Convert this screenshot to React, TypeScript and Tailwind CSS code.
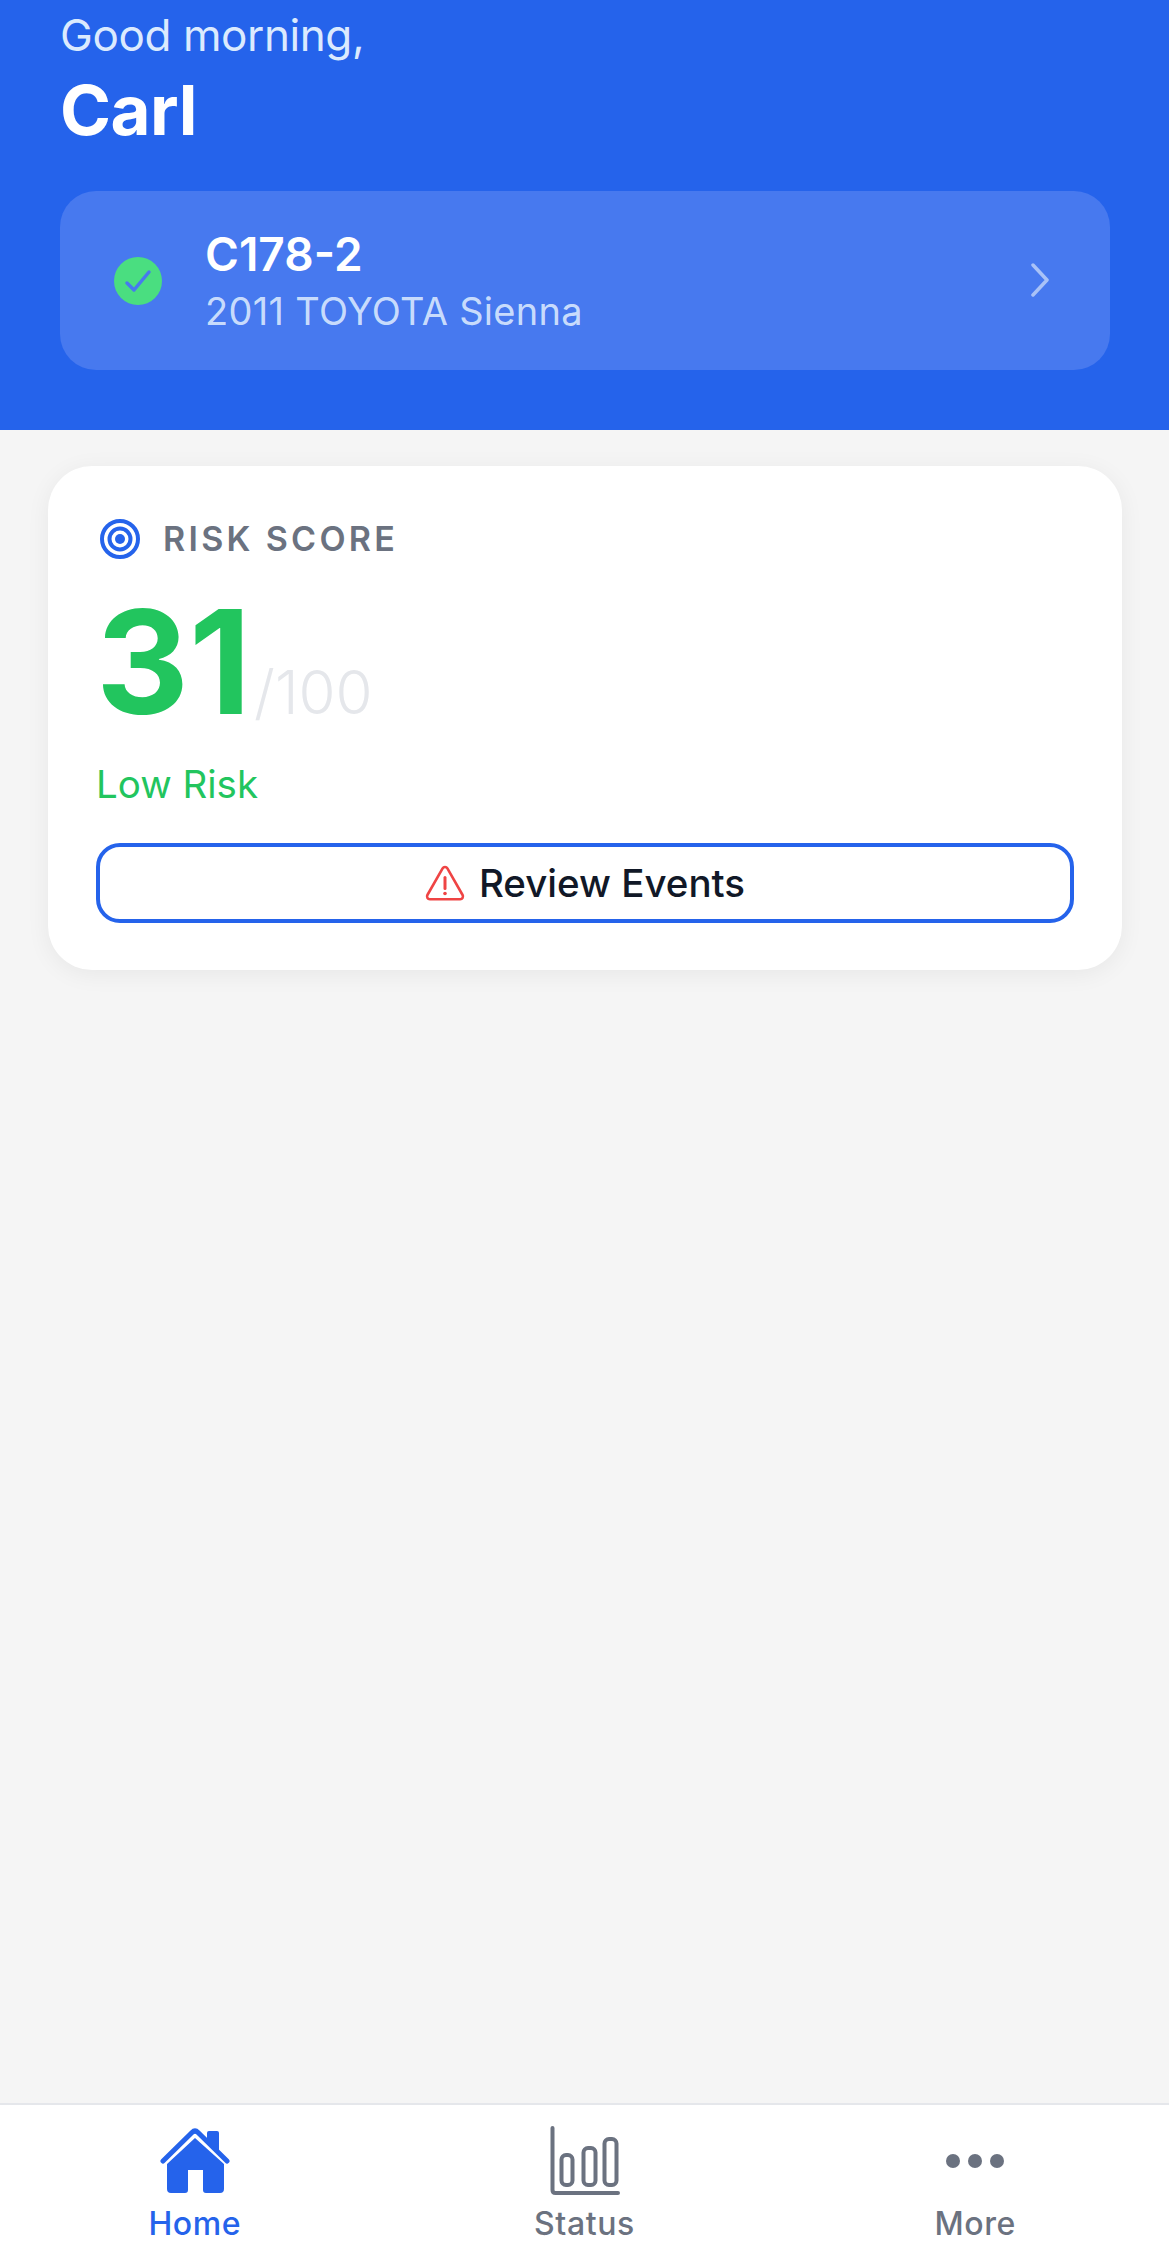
export default function App() {
  return (
    <div className="h-[2258px] w-full flex flex-col bg-[#f5f5f5] font-['Inter',sans-serif] overflow-hidden">
      <header className="h-[430px] shrink-0 bg-[#2563eb] pl-[60px] pr-[59px] pt-[7px]">
        <p className="text-[44px] leading-[56px] tracking-[-0.4px] text-[#dbeafe]">Good morning,</p>
        <h1 className="mt-[5px] text-[69px] leading-[84px] font-bold tracking-[-0.5px] text-white">Carl</h1>
        <button className="mt-[39px] flex h-[179px] w-full items-center rounded-[36px] bg-[#4779ef] pl-[54px] pr-[60px] text-left">
          <svg width="48" height="48" viewBox="0 0 48 48" className="shrink-0">
            <circle cx="24" cy="24" r="24" fill="#4ade80" />
            <path d="M13 26l7 7L35 15" fill="none" stroke="#4779ef" strokeWidth="3.5" strokeLinecap="round" strokeLinejoin="round" />
          </svg>
          <div className="ml-[43px] flex-1">
            <div className="text-[46px] leading-[54px] font-semibold text-white">C178-2</div>
            <div className="mt-[6px] text-[38px] leading-[48px] tracking-[0.3px] text-[#dbeafe]/90">2011 TOYOTA Sienna</div>
          </div>
          <svg width="20" height="34" viewBox="0 0 20 34" className="-mt-[2px] shrink-0">
            <path d="M3 2l14 15L3 32" fill="none" stroke="#a9c2f7" strokeWidth="3.5" strokeLinecap="round" strokeLinejoin="round" />
          </svg>
        </button>
      </header>

      <main className="flex-1 pl-[48px] pr-[47px] pt-[36px]">
        <section className="h-[504px] rounded-[44px] bg-white px-[48px] pt-[51px] shadow-[0_4px_24px_rgba(0,0,0,0.06)]">
          <div className="flex items-center">
            <svg width="40" height="40" viewBox="0 0 40 40" className="ml-[4px] shrink-0">
              <circle cx="20" cy="20" r="18" fill="none" stroke="#2563eb" strokeWidth="4" />
              <circle cx="20" cy="20" r="10.5" fill="none" stroke="#2563eb" strokeWidth="4" />
              <circle cx="20" cy="20" r="5" fill="#2563eb" />
            </svg>
            <span className="ml-[23px] text-[34px] leading-[44px] font-semibold tracking-[3.3px] text-[#6b7280]">RISK SCORE</span>
          </div>
          <div className="mt-[36px] flex items-baseline">
            <span className="text-[144px] leading-[130px] font-bold text-[#22c55e]">31</span>
            <span className="ml-[3px] text-[60px] leading-[70px] font-light text-[#e5e7eb]">/100</span>
          </div>
          <p className="mt-[33px] text-[38.5px] leading-[48px] text-[#22c55e]">Low Risk</p>
          <button className="mt-[35px] flex h-[80px] w-full items-center justify-center rounded-[24px] border-[4px] border-[#2563eb] bg-white">
            <svg width="40" height="36" viewBox="0 0 40 36" className="shrink-0">
              <path d="M17.6 3.4a2.8 2.8 0 0 1 4.8 0L37.6 30a2.8 2.8 0 0 1-2.4 4.2H4.8A2.8 2.8 0 0 1 2.4 30Z" fill="none" stroke="#ef4444" strokeWidth="2.6" strokeLinejoin="round" />
              <path d="M20 12.5v11" stroke="#ef4444" strokeWidth="3" strokeLinecap="round" />
              <circle cx="20" cy="28.5" r="1.8" fill="#ef4444" />
            </svg>
            <span className="ml-[14px] text-[38.5px] leading-[48px] font-medium text-[#111827]">Review Events</span>
          </button>
        </section>
      </main>

      <nav className="h-[155px] shrink-0 grid grid-cols-3 border-t-2 border-[#e5e7eb] bg-white">
        <div className="flex flex-col items-center pt-[22px]">
          <svg width="72" height="68" viewBox="0 0 72 68">
            <path d="M4 34 L33 5.5 Q36 2.5 39 5.5 L68 34" fill="none" stroke="#2563eb" strokeWidth="5" strokeLinecap="round" strokeLinejoin="round" />
            <path d="M48 13 V6 Q48 4 50 4 H58 Q60 4 60 6 V26 Z" fill="#2563eb" />
            <path d="M36 11 L8 37 V62 Q8 66 12 66 H26 Q29 66 29 63 V43 H44 V63 Q44 66 47 66 H61 Q65 66 65 62 V37 Z" fill="#2563eb" />
          </svg>
          <span className="mt-[10px] text-[32px] leading-[38px] tracking-[0.6px] font-medium text-[#2563eb]">Home</span>
        </div>
        <div className="flex flex-col items-center pt-[20px]">
          <svg width="72" height="70" viewBox="0 0 72 70">
            <path d="M4.5 3V65Q4.5 68 7.5 68H70" fill="none" stroke="#6b7280" strokeWidth="4" strokeLinecap="round" />
            <rect x="13.5" y="30" width="11" height="30" rx="4.5" fill="none" stroke="#6b7280" strokeWidth="4" />
            <rect x="35.5" y="23" width="12" height="37" rx="4.5" fill="none" stroke="#6b7280" strokeWidth="4" />
            <rect x="56.5" y="14" width="12" height="46" rx="4.5" fill="none" stroke="#6b7280" strokeWidth="4" />
          </svg>
          <span className="mt-[10px] text-[32px] leading-[38px] tracking-[0.6px] font-medium text-[#6b7280]">Status</span>
        </div>
        <div className="flex flex-col items-center pt-[21px]">
          <svg width="72" height="68" viewBox="0 0 72 68">
            <circle cx="15" cy="35" r="7" fill="#6b7280" />
            <circle cx="37" cy="35" r="7" fill="#6b7280" />
            <circle cx="59" cy="35" r="7" fill="#6b7280" />
          </svg>
          <span className="mt-[11px] ml-[2px] text-[32px] leading-[38px] tracking-[0.6px] font-medium text-[#6b7280]">More</span>
        </div>
      </nav>
    </div>
  );
}
